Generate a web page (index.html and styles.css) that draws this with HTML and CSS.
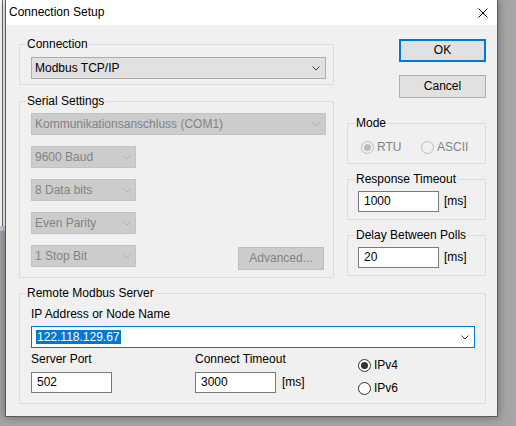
FILE: index.html
```html
<!DOCTYPE html>
<html>
<head>
<meta charset="utf-8">
<title>Connection Setup</title>
<link rel="stylesheet" href="styles.css">
</head>
<body>
<div class="behind"></div>
<div class="dialog">
  <div class="titlebar">
    <span class="title">Connection Setup</span>
    <svg class="close" width="10" height="10" viewBox="0 0 10 10"><path d="M0.5 0.5 L9.5 9.5 M9.5 0.5 L0.5 9.5" fill="none" stroke="#000" stroke-width="1"/></svg>
  </div>
  <div class="content">
    <div class="toprow">
      <div class="leftcol">
        <div class="group g-conn">
          <span class="legend">Connection</span>
          <div class="combo combo-wide"><span class="val">Modbus TCP/IP</span><svg class="chev" width="8" height="5" viewBox="0 0 8 5"><path d="M0.5 0.5 L4 4 L7.5 0.5" fill="none" stroke="#3c3c3c"/></svg></div>
        </div>
        <div class="group g-serial">
          <span class="legend">Serial Settings</span>
          <div class="combo combo-wide is-disabled"><span class="val">Kommunikationsanschluss (COM1)</span><svg class="chev" width="8" height="5" viewBox="0 0 8 5"><path d="M0.5 0.5 L4 4 L7.5 0.5" fill="none" stroke="#b0b0b0"/></svg></div>
          <div class="combo combo-small is-disabled"><span class="val">9600 Baud</span><svg class="chev" width="8" height="5" viewBox="0 0 8 5"><path d="M0.5 0.5 L4 4 L7.5 0.5" fill="none" stroke="#b0b0b0"/></svg></div>
          <div class="combo combo-small is-disabled"><span class="val">8 Data bits</span><svg class="chev" width="8" height="5" viewBox="0 0 8 5"><path d="M0.5 0.5 L4 4 L7.5 0.5" fill="none" stroke="#b0b0b0"/></svg></div>
          <div class="combo combo-small is-disabled"><span class="val">Even Parity</span><svg class="chev" width="8" height="5" viewBox="0 0 8 5"><path d="M0.5 0.5 L4 4 L7.5 0.5" fill="none" stroke="#b0b0b0"/></svg></div>
          <div class="serial-last">
            <div class="combo combo-small is-disabled"><span class="val">1 Stop Bit</span><svg class="chev" width="8" height="5" viewBox="0 0 8 5"><path d="M0.5 0.5 L4 4 L7.5 0.5" fill="none" stroke="#b0b0b0"/></svg></div>
            <div class="btn btn-advanced is-disabled">Advanced...</div>
          </div>
        </div>
      </div>
      <div class="rightcol">
        <div class="btn btn-default">OK</div>
        <div class="btn btn-cancel">Cancel</div>
        <div class="group g-right g-mode">
          <span class="legend">Mode</span>
          <div class="radio is-disabled radio-rtu"><span class="dot is-checked"></span><span>RTU</span></div>
          <div class="radio is-disabled"><span class="dot"></span><span>ASCII</span></div>
        </div>
        <div class="group g-right g-time">
          <span class="legend">Response Timeout</span>
          <div class="edit">1000</div>
          <span class="unit">[ms]</span>
        </div>
        <div class="group g-right g-time">
          <span class="legend">Delay Between Polls</span>
          <div class="edit">20</div>
          <span class="unit">[ms]</span>
        </div>
      </div>
    </div>
    <div class="group g-remote">
      <span class="legend">Remote Modbus Server</span>
      <div class="field-label">IP Address or Node Name</div>
      <div class="combo combo-ip"><span class="val"><span class="sel">122.118.129.67</span></span><svg class="chev" width="8" height="5" viewBox="0 0 8 5"><path d="M0.5 0.5 L4 4 L7.5 0.5" fill="none" stroke="#3c3c3c"/></svg></div>
      <div class="remote-row">
        <div class="rcol">
          <div class="field-label">Server Port</div>
          <div class="edit">502</div>
        </div>
        <div class="rcol">
          <div class="field-label">Connect Timeout</div>
          <div class="edit-row"><div class="edit">3000</div><span class="unit">[ms]</span></div>
        </div>
        <div class="rcol rcol-radios">
          <div class="radio radio-ip"><span class="dot is-checked"></span><span>IPv4</span></div>
          <div class="radio radio-ip"><span class="dot"></span><span>IPv6</span></div>
        </div>
      </div>
    </div>
  </div>
</div>
</body>
</html>
```

FILE: styles.css
```css
* { box-sizing: border-box; }

html, body {
  margin: 0;
  padding: 0;
}

body {
  width: 516px;
  height: 426px;
  position: relative;
  overflow: hidden;
  background: #a5a5a5;
  font-family: "Liberation Sans", Arial, sans-serif;
  font-size: 12px;
  line-height: 15px;
  color: #000;
}

.behind {
  position: absolute;
  left: 0;
  top: 0;
  width: 5px;
  height: 231px;
  background-color: #fff;
  background-image:
    linear-gradient(to bottom, transparent 226px, #c3cfdb 226px),
    linear-gradient(to right, transparent 2px, #6e6e6e 2px, #6e6e6e 3px, transparent 3px),
    repeating-linear-gradient(to bottom, transparent 0, transparent 21px, #a8a8a8 21px, #a8a8a8 22px, transparent 22px, transparent 20px);
  background-size: 5px 231px, 5px 226px, 5px 20px;
  background-repeat: no-repeat, no-repeat, repeat-y;
}

.dialog {
  position: absolute;
  left: 5px;
  top: 0;
  width: 493px;
  height: 417px;
  border: 1px solid #5a5a5a;
  border-top: none;
  background: #f0f0f0;
  box-shadow: 0 0 9px rgba(0, 0, 0, 0.38);
  display: flex;
  flex-direction: column;
}

.titlebar {
  height: 25px;
  flex: none;
  background: #fff;
  display: flex;
  align-items: center;
  justify-content: space-between;
  padding: 0 9px 0 3px;
}

.close { display: block; margin-top: 1px; }

.content {
  padding: 14px 0 0 13px;
}

.toprow {
  display: flex;
  gap: 13px;
}

.leftcol {
  width: 315px;
  margin-top: 5px;
  display: flex;
  flex-direction: column;
}

.rightcol {
  width: 139px;
  display: flex;
  flex-direction: column;
}

/* group boxes */
.group {
  position: relative;
  border: 1px solid #dcdcdc;
}

.legend {
  position: absolute;
  top: -8px;
  left: 6px;
  padding: 0 1px;
  background: #f0f0f0;
  white-space: nowrap;
}

.g-right .legend { left: 7px; }

.g-conn {
  height: 41px;
  padding: 12px 0 0 11px;
}

.g-serial {
  margin-top: 16px;
  height: 177px;
  padding: 11px 0 0 11px;
  display: flex;
  flex-direction: column;
  gap: 11px;
}

.serial-last {
  display: flex;
  align-items: flex-start;
  justify-content: space-between;
  padding-right: 9px;
}

/* combo boxes */
.combo {
  height: 22px;
  display: flex;
  align-items: center;
  justify-content: space-between;
  background: #e1e1e1;
  border: 1px solid #adadad;
  padding: 0 5px 0 3px;
  white-space: nowrap;
}

.combo .chev { display: block; flex: none; }

.combo-wide { width: 295px; }
.combo-small { width: 105px; padding-right: 4px; }

.combo.is-disabled {
  background: #cccccc;
  border-color: #c3c3c3;
  color: #838383;
}

.combo-ip {
  width: 444px;
  margin-top: 4px;
  background: #fff;
  border-color: #0078d7;
  padding-left: 4px;
}

.sel {
  display: inline-block;
  background: #0078d7;
  color: #fff;
  padding: 0 1px;
  line-height: 14px;
}

/* buttons */
.btn {
  width: 87px;
  height: 23px;
  display: flex;
  align-items: center;
  justify-content: center;
  background: #e1e1e1;
  border: 1px solid #adadad;
  align-self: flex-end;
}

.btn-default {
  border: 2px solid #0078d7;
}

.btn-cancel { margin-top: 13px; }

.btn-advanced {
  width: 86px;
  margin-top: 2px;
  align-self: auto;
}

.btn.is-disabled {
  background: #cccccc;
  border-color: #bfbfbf;
  color: #838383;
}

/* right groups */
.g-right {
  height: 41px;
  margin-top: 15px;
}

.g-mode {
  margin-top: 25px;
  display: flex;
  align-items: center;
  padding: 7px 0 0 13px;
}

.g-time {
  display: flex;
  align-items: center;
  gap: 5px;
  padding: 0 0 0 10px;
}

.g-time .edit { margin-top: 3px; }
.g-time .unit { margin-top: 3px; }

/* radios */
.radio {
  display: flex;
  align-items: center;
  gap: 3px;
  white-space: nowrap;
}

.radio-rtu { width: 60px; }

.dot {
  position: relative;
  width: 13px;
  height: 13px;
  border-radius: 50%;
  border: 1px solid #333;
  background: #fff;
  flex: none;
}

.dot.is-checked::after {
  content: "";
  position: absolute;
  left: 2px;
  top: 2px;
  width: 7px;
  height: 7px;
  border-radius: 50%;
  background: #333;
}

.radio.is-disabled { color: #838383; }
.radio.is-disabled .dot {
  border-color: #bcbcbc;
  background: #f0f0f0;
}
.radio.is-disabled .dot.is-checked::after { background: #bcbcbc; }

/* edit boxes */
.edit {
  width: 81px;
  height: 21px;
  background: #fff;
  border: 1px solid #7a7a7a;
  padding-left: 5px;
  display: flex;
  align-items: center;
  flex: none;
}

/* remote group */
.g-remote {
  margin-top: 15px;
  width: 467px;
  height: 111px;
  padding: 13px 0 0 11px;
}

.remote-row {
  display: grid;
  grid-template-columns: 164px 163px auto;
  margin-top: 4px;
}

.rcol .field-label { margin-bottom: 5px; }

.edit-row {
  display: flex;
  align-items: center;
  gap: 6px;
}

.rcol-radios {
  padding-top: 2px;
  display: flex;
  flex-direction: column;
}

.radio-ip { height: 23px; }
```
